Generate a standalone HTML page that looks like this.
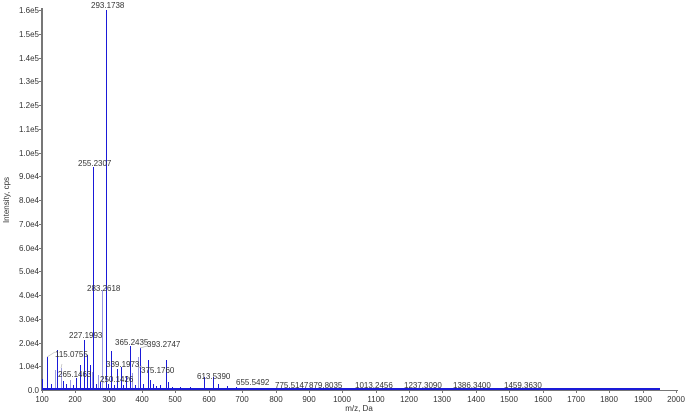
<!DOCTYPE html>
<html><head><meta charset="utf-8"><style>
html,body{margin:0;padding:0;background:#fff;width:685px;height:412px;overflow:hidden}
svg{display:block;font-family:"Liberation Sans",Arial,sans-serif}
.p{position:absolute;width:1px;background:#1a1ad8}
.l{position:absolute;width:1px;background:#9a9ae0}
</style></head><body>
<div style="position:absolute;left:0;top:0;width:685px;height:412px">
<svg width="685" height="412" viewBox="0 0 685 412" style="position:absolute;left:0;top:0">
<g font-size="8" fill="#333" text-anchor="end">
<text x="39" y="13">1.6e5</text><text x="39" y="37">1.5e5</text><text x="39" y="61">1.4e5</text>
<text x="39" y="84">1.3e5</text><text x="39" y="108">1.2e5</text><text x="39" y="132">1.1e5</text>
<text x="39" y="156">1.0e5</text><text x="39" y="179">9.0e4</text><text x="39" y="203">8.0e4</text>
<text x="39" y="227">7.0e4</text><text x="39" y="251">6.0e4</text><text x="39" y="274">5.0e4</text>
<text x="39" y="298">4.0e4</text><text x="39" y="322">3.0e4</text><text x="39" y="346">2.0e4</text>
<text x="39" y="369">1.0e4</text><text x="39" y="393">0.0</text>
</g>
<text transform="translate(9,200) rotate(-90)" font-size="8" fill="#333" text-anchor="middle">Intensity, cps</text>
<g font-size="8" fill="#333" text-anchor="middle">
<text x="42" y="402">100</text><text x="75" y="402">200</text><text x="109" y="402">300</text>
<text x="142" y="402">400</text><text x="175" y="402">500</text><text x="209" y="402">600</text>
<text x="242" y="402">700</text><text x="276" y="402">800</text><text x="309" y="402">900</text>
<text x="342" y="402">1000</text><text x="376" y="402">1100</text><text x="409" y="402">1200</text>
<text x="442" y="402">1300</text><text x="476" y="402">1400</text><text x="509" y="402">1500</text>
<text x="543" y="402">1600</text><text x="576" y="402">1700</text><text x="609" y="402">1800</text>
<text x="643" y="402">1900</text><text x="676" y="402">2000</text>
<text x="359" y="411">m/z, Da</text>
</g>
<g stroke="#777" stroke-width="1" shape-rendering="crispEdges">
<line x1="42" y1="8" x2="42" y2="391" stroke-width="2"/>
<line x1="42" y1="390.5" x2="678" y2="390.5"/>
<path d="M39 10.5h3M39 34.5h3M39 58.5h3M39 81.5h3M39 105.5h3M39 129.5h3M39 153.5h3M39 176.5h3M39 200.5h3M39 224.5h3M39 248.5h3M39 271.5h3M39 295.5h3M39 319.5h3M39 343.5h3M39 366.5h3"/>
<path d="M42.5 390v3M75.5 390v3M109.5 390v3M142.5 390v3M175.5 390v3M209.5 390v3M242.5 390v3M276.5 390v3M309.5 390v3M342.5 390v3M376.5 390v3M409.5 390v3M442.5 390v3M476.5 390v3M509.5 390v3M543.5 390v3M576.5 390v3M609.5 390v3M643.5 390v3M676.5 390v3"/>
</g>
<g fill="#9a9ae0">
<rect x="102" y="290" width="1" height="100"/><rect x="55" y="370" width="1" height="20"/><rect x="138" y="357" width="1" height="33"/><rect x="61" y="368" width="1" height="22"/><rect x="92" y="372" width="1" height="18"/><rect x="98" y="375" width="1" height="15"/><rect x="70" y="380" width="1" height="10"/><rect x="132" y="373" width="1" height="17"/>
</g>
<g fill="#1a1ad8">
<rect x="106" y="10" width="1" height="380"/><rect x="93" y="167" width="1" height="223"/>
<rect x="42" y="379" width="1" height="11"/><rect x="47" y="357" width="1" height="33"/><rect x="57" y="350" width="1" height="40"/><rect x="63" y="381" width="1" height="9"/><rect x="76" y="378" width="1" height="12"/><rect x="80" y="365" width="1" height="25"/><rect x="84" y="340" width="1" height="50"/><rect x="87" y="355" width="1" height="35"/><rect x="90" y="365" width="1" height="25"/><rect x="111" y="351" width="1" height="39"/><rect x="117" y="369" width="1" height="21"/><rect x="121" y="367" width="1" height="23"/><rect x="126" y="376" width="1" height="14"/><rect x="130" y="346" width="1" height="44"/><rect x="140" y="348" width="1" height="42"/><rect x="148" y="360" width="1" height="30"/><rect x="150" y="380" width="1" height="10"/><rect x="166" y="360" width="1" height="30"/><rect x="168" y="382" width="1" height="8"/><rect x="160" y="385" width="1" height="5"/><rect x="153" y="384" width="1" height="6"/><rect x="204" y="377" width="1" height="13"/><rect x="213" y="377" width="1" height="13"/><rect x="218" y="384" width="1" height="6"/><rect x="227" y="386" width="1" height="4"/><rect x="236" y="387" width="1" height="3"/><rect x="51" y="384" width="1" height="6"/><rect x="66" y="384" width="1" height="6"/><rect x="73" y="385" width="1" height="5"/><rect x="96" y="384" width="1" height="6"/><rect x="100" y="382" width="1" height="8"/><rect x="108" y="384" width="1" height="6"/><rect x="114" y="385" width="1" height="5"/><rect x="123" y="385" width="1" height="5"/><rect x="135" y="385" width="1" height="5"/><rect x="143" y="384" width="1" height="6"/><rect x="156" y="386" width="1" height="4"/><rect x="172" y="387" width="1" height="3"/><rect x="180" y="387" width="1" height="3"/><rect x="190" y="387" width="1" height="3"/>
<rect x="42" y="388" width="618" height="2"/>
</g>
<g stroke="#bbb" stroke-width="0.7" fill="none">
<path d="M47 357L55 352M61 368L62 364M140 348L147 346M138 368L142 366M103 383L108 380"/>
</g>
<g font-size="8" fill="#333">
<text x="91" y="8">293.1738</text>
<text x="78" y="166">255.2307</text>
<text x="87" y="291">283.2618</text>
<text x="69" y="338">227.1993</text>
<text x="55" y="357">115.0755</text>
<text x="115" y="345">365.2435</text>
<text x="147" y="347">393.2747</text>
<text x="106" y="367">339.1973</text>
<text x="58" y="377">265.1463</text>
<text x="141" y="373">375.1760</text>
<text x="100" y="382">250.1426</text>
<text x="197" y="379">613.5390</text>
<text x="236" y="385">655.5492</text>
<text x="275" y="388">775.5147</text>
<text x="309" y="388">879.8035</text>
<text x="355" y="388">1013.2456</text>
<text x="404" y="388">1237.3090</text>
<text x="453" y="388">1386.3400</text>
<text x="504" y="388">1459.3630</text>
</g>
</svg>
</div>
</body></html>
